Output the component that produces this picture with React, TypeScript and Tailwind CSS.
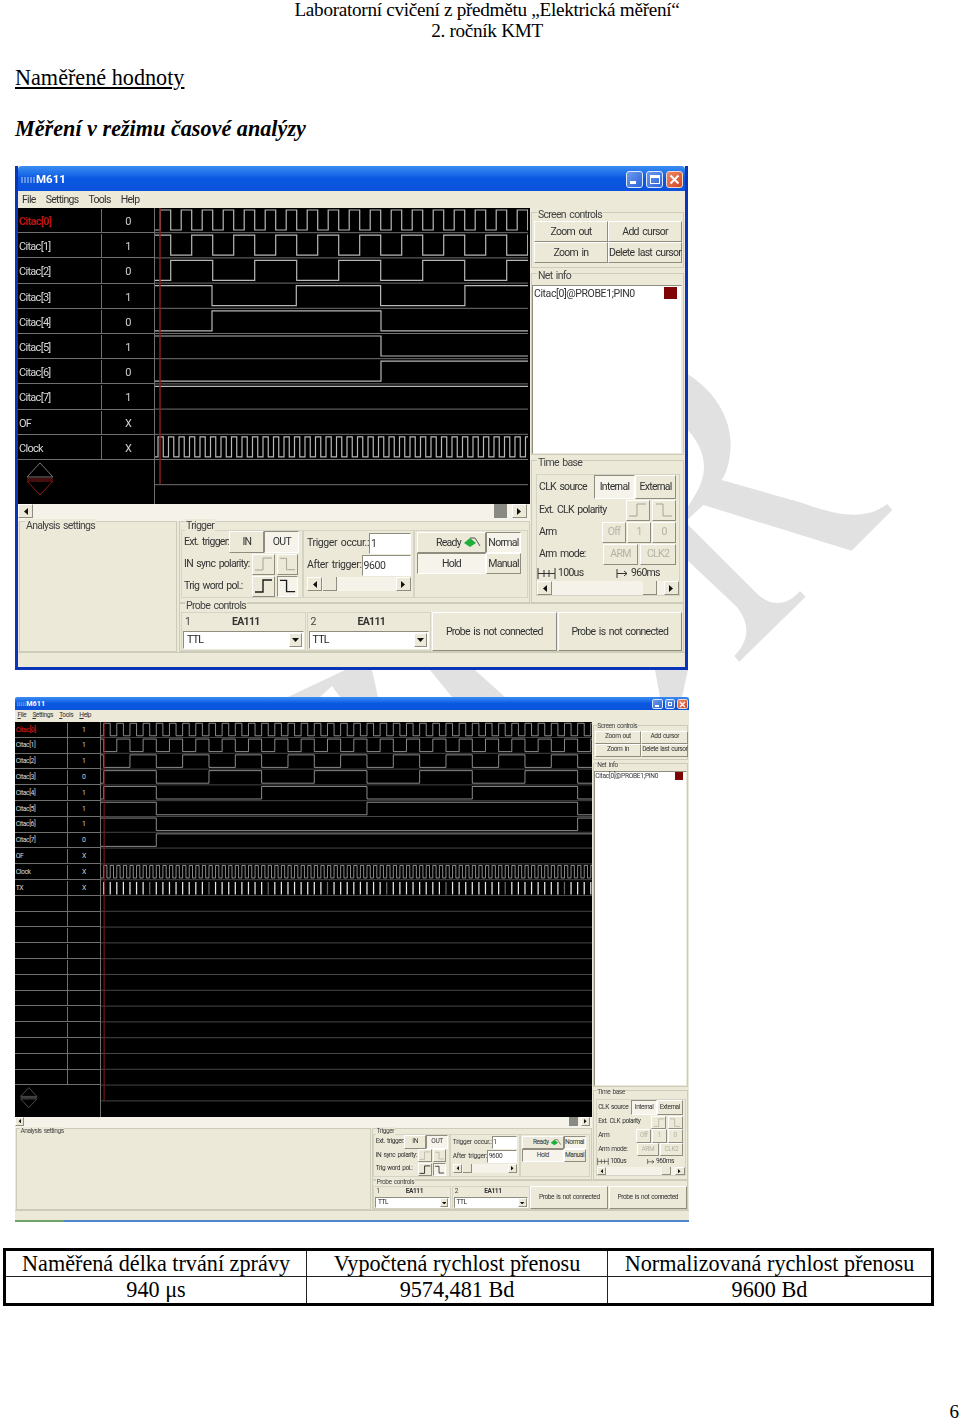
import { ReactNode } from "react";
import clsx from "clsx";

const range = (start: number, step: number, end = 790) => {
  const out: number[] = [];
  for (let x = start; x < end; x += step) out.push(x);
  return out;
};

type Signal = { name: string; value: string; high?: boolean; edges?: number[]; ticks?: boolean };

const SIGNALS_A: Signal[] = [
  { name: "Citac[0]", value: "0", edges: range(5.2, 10.5, 373) },
  { name: "Citac[1]", value: "1", high: true, edges: range(15.7, 21, 373) },
  { name: "Citac[2]", value: "0", edges: range(15.7, 42, 373) },
  { name: "Citac[3]", value: "1", high: true, edges: range(57, 84.3, 373) },
  { name: "Citac[4]", value: "0", edges: [57, 226] },
  { name: "Citac[5]", value: "1", high: true, edges: [226] },
  { name: "Citac[6]", value: "0", edges: [226] },
  { name: "Citac[7]", value: "1", high: true, edges: [] },
  { name: "OF", value: "X" },
  { name: "Clock", value: "X", edges: range(3, 5.25, 373) },
];

const SIGNALS_B: Signal[] = [
  { name: "Citac[0]", value: "1", edges: range(4.2, 10.5) },
  { name: "Citac[1]", value: "1", high: true, edges: range(4.2, 21) },
  { name: "Citac[2]", value: "1", high: true, edges: range(4.2, 42) },
  { name: "Citac[3]", value: "0", edges: range(4.2, 84) },
  { name: "Citac[4]", value: "1", edges: [4.2, 88.2, 256.2, 424.2, 592.2, 760.2] },
  { name: "Citac[5]", value: "1", high: true, edges: [88.2, 424.2, 760.2] },
  { name: "Citac[6]", value: "1", high: true, edges: [88.2, 760.2] },
  { name: "Citac[7]", value: "0", edges: [88.2] },
  { name: "OF", value: "X" },
  { name: "Clock", value: "X", edges: range(4.2, 5.25) },
  { name: "TX", value: "X", ticks: true },
  ...Array.from({ length: 12 }, () => ({ name: "", value: "" })),
];

const ROW = 25.2;

function wavePath(sig: Signal, row: number, width: number) {
  const top = row * ROW + 2;
  const bottom = row * ROW + 22;
  let level = sig.high;
  let d = `M0 ${level ? top : bottom}`;
  for (const x of sig.edges ?? []) {
    level = !level;
    d += ` H${x} V${level ? top : bottom}`;
  }
  return `${d} H${width}`;
}

function Waves({ signals, width, height, lines }: { signals: Signal[]; width: number; height: number; lines: number }) {
  return (
    <svg width={width} height={height} className="block shrink-0">
      {Array.from({ length: lines }, (_, i) => (
        <line key={i} x1={0} x2={width} y1={(i + 1) * ROW - 0.5} y2={(i + 1) * ROW - 0.5} stroke="#707070" />
      ))}
      {signals.map((sig, i) =>
        sig.edges ? <path key={i} d={wavePath(sig, i, width)} fill="none" stroke="#b8b8b8" strokeWidth={1.2} /> : null
      )}
      {signals.map((sig, i) =>
        sig.ticks
          ? range(4.2, 10.5).map((x, k) => (
              <line key={k} x1={x} x2={x} y1={i * ROW + 3} y2={i * ROW + 23} stroke="#e8e8e8" strokeWidth={2} opacity={k % 9 === 7 ? 0.45 : 1} />
            ))
          : null
      )}
      <line x1={5} x2={5} y1={0} y2={lines * ROW - 1} stroke="#8c1c1c" strokeWidth={1.5} />
    </svg>
  );
}

function Btn({ children, pressed, off, className }: { children?: ReactNode; pressed?: boolean; off?: boolean; className?: string }) {
  return (
    <div
      className={clsx(
        "flex items-center justify-center whitespace-nowrap border",
        pressed
          ? "border-t-[#8f8d7e] border-l-[#8f8d7e] border-r-white border-b-white bg-[#f5f3ea]"
          : "border-t-white border-l-white border-r-[#8f8d7e] border-b-[#8f8d7e] bg-[#ece9d8]",
        off ? "text-[#b4b2a6]" : "text-[#333]",
        className
      )}
    >
      {children}
    </div>
  );
}

function Edge({ rising, dark }: { rising?: boolean; dark?: boolean }) {
  return (
    <svg width="20" height="18" viewBox="0 0 20 18">
      <path d={rising ? "M1 15H9V3H18" : "M2 3H9V15H18"} fill="none" stroke={dark ? "#1a1a1a" : "#a5a396"} strokeWidth={dark ? 1.4 : 1} />
    </svg>
  );
}

function Arrow({ left }: { left?: boolean }) {
  return (
    <Btn className="h-[14px] w-[15px] shrink-0">
      <svg width="5" height="7" viewBox="0 0 5 7">
        <path d={left ? "M5 0V7L1 3.5Z" : "M0 0V7L4 3.5Z"} fill="#111" />
      </svg>
    </Btn>
  );
}

function Group({ title, className, titleClass = "-top-[5px]", children }: { title: string; className?: string; titleClass?: string; children?: ReactNode }) {
  return (
    <div className={clsx("relative border border-[#cdcbba]", className)}>
      <span className={clsx("absolute left-[5px] whitespace-nowrap bg-[#ece9d8] px-[1px] text-[10.5px] leading-[13px] text-[#444]", titleClass)}>{title}</span>
      {children}
    </div>
  );
}

function ProbeCell({ n }: { n: string }) {
  return (
    <div className="flex w-[125px] flex-col border border-[#d5d3c3] px-[1px]">
      <div className="flex h-[18px] items-center text-[10.5px] text-[#444]">
        <span className="w-[49px] pl-[2px]">{n}</span>
        <span className="font-bold text-[#333]">EA111</span>
      </div>
      <div className="flex h-[18px] items-center justify-between border border-t-[#8f8d7e] border-l-[#8f8d7e] border-r-white border-b-white bg-white pl-[3px] pr-[1px] text-[10.5px] text-[#222]">
        TTL
        <Btn className="h-[14px] w-[13px]">
          <svg width="7" height="4" viewBox="0 0 7 4">
            <path d="M0 0H7L3.5 4Z" fill="#111" />
          </svg>
        </Btn>
      </div>
    </div>
  );
}

function Xp({
  signals,
  rows,
  lines,
  waveW,
  black,
  maximized,
  className,
  titleH,
  menuH,
  statusH,
}: {
  signals: Signal[];
  rows: number;
  lines: number;
  waveW: number;
  black: string;
  maximized?: boolean;
  className: string;
  titleH: string;
  menuH: string;
  statusH: string;
}) {
  return (
    <div
      className={clsx(
        "flex flex-col bg-[#ece9d8] [font-family:Roboto,sans-serif] tracking-[-0.7px] [word-spacing:1.5px]",
        !maximized && "border-x-[3px] border-b-[3px] border-[#0a35b8]",
        className
      )}
    >
      {/* title bar */}
      <div className={clsx("flex items-center justify-between rounded-t-[4px] bg-gradient-to-b from-[#3b8df2] via-[#0a58e2] to-[#0b52da] pl-[3px] pr-[2px]", titleH)}>
        <div className="flex items-center gap-[1px] pt-[3px]">
          <svg width="14" height="10" viewBox="0 0 14 10">
            <path d="M0 3H14M0 5H14M0 7H14" stroke="#bcd0ee" strokeDasharray="2 1" />
          </svg>
          <span className="text-[11.5px] font-bold tracking-normal text-white">M611</span>
        </div>
        <div className="flex gap-[3px] pt-[2px]">
          <div className="flex h-[17px] w-[17px] items-end rounded-[3px] border border-[#dce8fa] bg-gradient-to-br from-[#6d9bec] to-[#2c62d8] p-[3px]">
            <div className="h-[3px] w-[6px] bg-white" />
          </div>
          <div className="flex h-[17px] w-[17px] items-center justify-center rounded-[3px] border border-[#dce8fa] bg-gradient-to-br from-[#6d9bec] to-[#2c62d8]">
            <div className={clsx("border border-t-[3px] border-white", maximized ? "h-[7px] w-[7px]" : "h-[9px] w-[10px]")} />
          </div>
          <div className="flex h-[17px] w-[17px] items-center justify-center rounded-[3px] border border-[#f2d6cc] bg-gradient-to-br from-[#ee8a66] to-[#d2431f]">
            <svg width="11" height="11" viewBox="0 0 11 11">
              <path d="M1.5 1.5L9.5 9.5M9.5 1.5L1.5 9.5" stroke="#fff" strokeWidth="2" />
            </svg>
          </div>
        </div>
      </div>

      {/* menu */}
      <div className={clsx("flex items-center gap-[10px] pl-[4px] text-[10.5px] text-[#333]", menuH)}>
        {["File", "Settings", "Tools", "Help"].map((m) => (
          <span key={m}>
            <span className={maximized ? "underline" : ""}>{m[0]}</span>
            {m.slice(1)}
          </span>
        ))}
      </div>

      <div className="grid min-h-0 flex-1 grid-cols-[1fr_351px_155px] grid-rows-[1fr_82px_49px]">
        {/* black panel and its scrollbar */}
        <div className="col-span-2 flex flex-col">
          <div className={clsx("flex shrink-0 overflow-hidden bg-black", black)}>
            <div className="flex w-[137px] shrink-0 flex-col border-r border-[#707070]">
              {signals.slice(0, rows).map((s, i) => (
                <div key={i} className="flex h-[25.2px] shrink-0 border-b border-[#707070] pt-[1px] text-[11px] leading-[25px]">
                  <div className={clsx("w-[84px] border-r border-[#707070] pl-[1px]", i === 0 ? "font-bold text-[#b81414]" : "text-[#d8d8d8]")}>{s.name}</div>
                  <div className="flex-1 text-center text-[#d0d0d0]">{s.value}</div>
                </div>
              ))}
              <svg width="28" height="34" viewBox="0 0 28 34" className="ml-[8px] mt-[2px]">
                <path d="M1 15L14 1L27 15Z" fill="none" stroke="#777" />
                <path d="M1 19L14 33L27 19Z" fill="none" stroke={maximized ? "#777" : "#8c1c1c"} />
                <path d="M1 17H27" stroke={maximized ? "#777" : "#8c1c1c"} />
              </svg>
            </div>
            <Waves signals={signals} width={waveW} height={840} lines={lines} />
          </div>
          <div className="flex flex-1 items-start justify-between bg-[#f4f2e9] pr-[3px]">
            <Arrow left />
            <div className="ml-auto mr-[5px] h-[14px] w-[13px] bg-[#8a8a84]" />
            <Arrow />
          </div>
        </div>

        {/* right column */}
        <div className="row-span-2 flex flex-col gap-[5px] pl-[1px] pr-[1px] pt-[4px]">
          <Group title="Screen controls" className="h-[56px] shrink-0 pl-[2px] pr-[2px] pt-[8px]">
            <div className="grid grid-cols-[74px_1fr] grid-rows-[21px_21px] text-[10.5px]">
              <Btn>Zoom out</Btn>
              <Btn>Add cursor</Btn>
              <Btn>Zoom in</Btn>
              <Btn>Delete last cursor</Btn>
            </div>
          </Group>
          <Group title="Net info" className="min-h-0 flex-1 pr-[1px] pt-[11px]">
            <div className="flex h-full items-start justify-between whitespace-nowrap border border-t-[#8f8d7e] border-l-[#8f8d7e] border-r-[#ece9d8] border-b-[#ece9d8] bg-white pl-[1px] pr-[4px] text-[10.5px] tracking-[-0.4px] text-[#333]">
              Citac[0]@PROBE1;PIN0
              <div className="mt-[1px] h-[12px] w-[13px] bg-[#7f0505]" />
            </div>
          </Group>
          <Group title="Time base" className="h-[143px] shrink-0 pl-[4px] pr-[3px] pt-[13px]">
            <div className="flex flex-col whitespace-nowrap border border-[#d5d3c3] text-[10.5px] text-[#333]">
              <div className="flex h-[24px] items-center justify-between pl-[2px] pr-[3px]">
                CLK source
                <div className="flex h-[24px]">
                  <Btn pressed className="w-[41px]">Internal</Btn>
                  <Btn className="w-[41px]">External</Btn>
                </div>
              </div>
              <div className="flex h-[22px] items-center justify-between pl-[2px] pr-[3px]">
                Ext. CLK polarity
                <div className="flex gap-[2px]">
                  <Btn className="h-[21px] w-[24px]"><Edge rising /></Btn>
                  <Btn className="h-[21px] w-[24px]"><Edge /></Btn>
                </div>
              </div>
              <div className="flex h-[22px] items-center justify-between pl-[2px] pr-[3px]">
                Arm
                <div className="flex gap-[1px]">
                  <Btn off className="h-[21px] w-[24px]">Off</Btn>
                  <Btn off className="h-[21px] w-[24px]">1</Btn>
                  <Btn off className="h-[21px] w-[24px]">0</Btn>
                </div>
              </div>
              <div className="flex h-[22px] items-center justify-between pl-[2px] pr-[3px]">
                Arm mode:
                <div className="flex gap-[2px]">
                  <Btn off className="h-[21px] w-[35px]">ARM</Btn>
                  <Btn off className="h-[21px] w-[36px]">CLK2</Btn>
                </div>
              </div>
              <div className="flex h-[16px] items-center">
                <svg width="19" height="11" viewBox="0 0 19 11" className="mr-[2px]">
                  <path d="M1 0V11M7 2V9M12 2V9M18 0V11M1 5.5H18" stroke="#333" />
                </svg>
                <span className="w-[58px]">100us</span>
                <svg width="12" height="9" viewBox="0 0 12 9" className="mr-[3px]">
                  <path d="M1 0V9M1 4.5H11M8 2L11 4.5L8 7" fill="none" stroke="#333" />
                </svg>
                960ms
              </div>
              <div className="flex items-center bg-[#f4f2e9]">
                <Arrow left />
                <div className="flex-1" />
                <div className="mr-[7px] h-[14px] w-[14px] border-r border-b border-[#8f8d7e] bg-[#ece9d8]" />
                <Arrow />
              </div>
            </div>
          </Group>
        </div>

        {/* analysis settings */}
        <Group title="Analysis settings" titleClass="-top-[3px]" className="row-span-2 ml-[1px] mr-[2px]" />

        {/* trigger */}
        <Group title="Trigger" titleClass="-top-[3px]" className="flex pl-[1px] pr-[1px] pt-[8px]">
          <div className="flex h-[68px] w-[122px] flex-col whitespace-nowrap border border-[#d5d3c3] pl-[2px] pr-[4px] text-[10.5px] text-[#333]">
            <div className="flex h-[22px] items-center justify-between">
              Ext. trigger:
              <div className="flex h-[22px]">
                <Btn className="w-[35px]">IN</Btn>
                <Btn pressed className="w-[35px]">OUT</Btn>
              </div>
            </div>
            <div className="flex h-[22px] items-center justify-between">
              IN sync polarity:
              <div className="flex gap-[2px]">
                <Btn className="h-[21px] w-[23px]"><Edge rising /></Btn>
                <Btn className="h-[21px] w-[21px]"><Edge /></Btn>
              </div>
            </div>
            <div className="flex h-[22px] items-center justify-between">
              Trig word pol.:
              <div className="flex gap-[2px]">
                <Btn className="h-[21px] w-[23px]"><Edge rising dark /></Btn>
                <Btn pressed className="h-[21px] w-[21px]"><Edge dark /></Btn>
              </div>
            </div>
          </div>
          <div className="flex h-[68px] w-[111px] flex-col whitespace-nowrap border border-[#d5d3c3] pl-[3px] pr-[2px] pt-[1px] text-[10.5px] tracking-[-0.4px] text-[#333]">
            <div className="flex h-[22px] items-center justify-between">
              Trigger occur.:
              <div className="h-[21px] w-[44px] border border-t-[#8f8d7e] border-l-[#8f8d7e] border-r-white border-b-white bg-white pl-[1px] leading-[19px]">1</div>
            </div>
            <div className="flex h-[22px] items-center justify-between">
              After trigger:
              <div className="h-[21px] w-[52px] border border-t-[#8f8d7e] border-l-[#8f8d7e] border-r-white border-b-white bg-white pl-[1px] leading-[19px]">9600</div>
            </div>
            <div className="mt-[1px] flex items-center bg-[#f4f2e9]">
              <Arrow left />
              <div className="ml-[1px] h-[14px] w-[14px] border-r border-b border-[#8f8d7e] bg-[#ece9d8]" />
              <div className="flex-1" />
              <Arrow />
            </div>
          </div>
          <div className="flex h-[68px] flex-1 flex-col border border-[#d5d3c3] pl-[2px] pr-[6px] pt-[1px] text-[10.5px] text-[#333]">
            <div className="flex h-[21px]">
              <Btn className="flex-1 gap-[2px] pl-[14px]">
                Ready
                <svg width="18" height="11" viewBox="0 0 18 11">
                  <path d="M1 6L7 1L13 6L7 10Z" fill="#1fae3c" />
                  <path d="M7 1L12 1L17 9" fill="none" stroke="#555" />
                </svg>
              </Btn>
              <Btn pressed className="w-[35px]">Normal</Btn>
            </div>
            <div className="flex h-[21px]">
              <Btn pressed className="flex-1">Hold</Btn>
              <Btn className="w-[35px]">Manual</Btn>
            </div>
          </div>
        </Group>

        {/* probe controls */}
        <Group title="Probe controls" className="col-span-2 mr-[1px] flex gap-[1px] pl-[1px] pr-[1px] pt-[8px]">
          <ProbeCell n="1" />
          <ProbeCell n="2" />
          <Btn className="w-[125px] text-[10.5px]">Probe is not connected</Btn>
          <Btn className="w-[125px] text-[10.5px]">Probe is not connected</Btn>
        </Group>
      </div>

      <div className={clsx("shrink-0 border-t border-[#cdcbba]", statusH)} />
      {maximized && (
        <div className="flex h-[3px] shrink-0 bg-[#4d86c9]">
          <div className="w-[78px] bg-[#6fa568]" />
        </div>
      )}
    </div>
  );
}

const TABLE_HEAD = ["Naměřená délka trvání zprávy", "Vypočtená rychlost přenosu", "Normalizovaná rychlost přenosu"];
const TABLE_BODY = ["940 μs", "9574,481 Bd", "9600 Bd"];

export default function App() {
  return (
    <div className="relative h-[1419px] w-[960px] overflow-hidden bg-white text-black [font-family:'Liberation_Serif',serif]">
      {/* watermark */}
      <svg className="absolute inset-0" width="960" height="1419" viewBox="0 0 960 1419">
        <g fill="#e1e1e1">
          <g transform="translate(680 360) scale(0.3333)">
            <path d="M0 30C80 70 150 150 152 250C152 300 140 340 125 360L370 430C480 470 560 480 622 432L637 450L515 572L70 435L0 500V470C40 420 72 370 72 320C72 270 40 220 0 190Z" />
            <path d="M0 470L230 700C270 740 320 740 360 693L377 710L178 905L163 888C210 840 210 790 170 740L0 580Z" />
          </g>
          <path d="M345 670H372L378 697H340L332 686L320 697H288Z" />
          <path d="M430 670H475L505 697H452Z" />
          <path d="M655 670H688L682 697H660Z" />
        </g>
      </svg>

      <div className="relative flex flex-col">
        <div className="ml-[14px] text-center text-[19.2px] leading-[21px] tracking-[-0.3px]">
          <p className="-mt-[1px]">Laboratorní cvičení z předmětu „Elektrická měření“</p>
          <p>2. ročník KMT</p>
        </div>
        <h2 className="ml-[15px] mt-[25px] text-[22.2px] font-normal leading-[24px] underline">Naměřené hodnoty</h2>
        <h3 className="ml-[15px] mt-[27px] text-[22.2px] font-bold italic leading-[24px]">Měření v režimu časové analýzy</h3>

        <Xp
          className="ml-[15px] mt-[25px] h-[504px] w-[673px] shrink-0 blur-[0.3px]"
          signals={SIGNALS_A}
          rows={10}
          lines={11}
          waveW={373}
          black="h-[296px]"
          titleH="h-[25px] shrink-0"
          menuH="h-[17px] shrink-0"
          statusH="h-[15px]"
        />

        <Xp
          maximized
          className="ml-[24px] mt-[43px] h-[837px] w-[1075px] shrink-0 blur-[0.4px] [zoom:0.627]"
          signals={SIGNALS_B}
          rows={23}
          lines={24}
          waveW={784}
          black="h-[630px]"
          titleH="h-[21px] shrink-0"
          menuH="h-[19px] shrink-0"
          statusH="h-[15px]"
        />

        <table className="ml-[3px] mt-[26px] w-[931px] table-fixed border-collapse border-[3px] border-black text-center text-[22.2px] leading-[25.5px]">
          <colgroup>
            <col className="w-[302px]" />
            <col className="w-[301px]" />
            <col />
          </colgroup>
          <tbody>
            <tr>
              {TABLE_HEAD.map((t) => (
                <td key={t} className="border border-[#222] p-0">{t}</td>
              ))}
            </tr>
            <tr>
              {TABLE_BODY.map((t) => (
                <td key={t} className="border border-[#222] p-0">{t}</td>
              ))}
            </tr>
          </tbody>
        </table>

        <p className="mr-[1px] mt-[99px] text-right text-[19px] leading-[14px]">6</p>
      </div>
    </div>
  );
}
